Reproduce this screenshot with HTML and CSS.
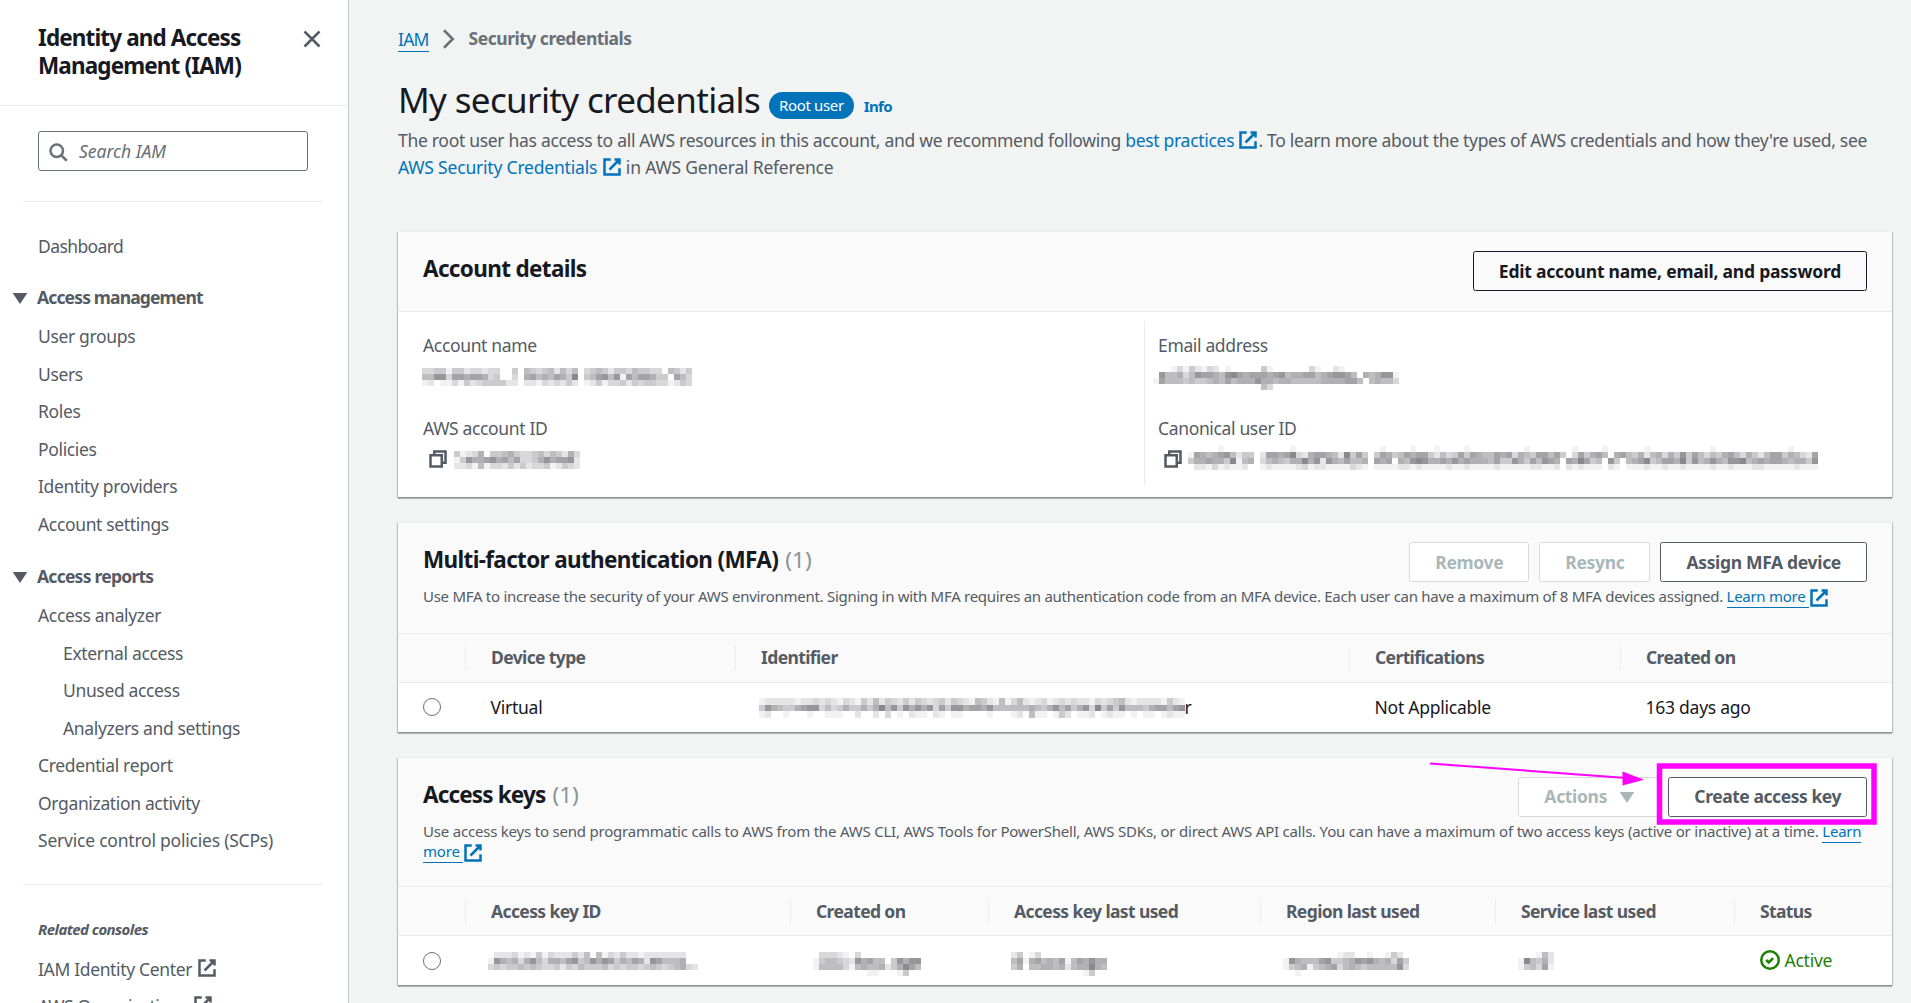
FILE: index.html
```html
<!DOCTYPE html>
<html lang="en">
<head>
<meta charset="utf-8">
<title>Security credentials | IAM</title>
<link rel="stylesheet" href="styles.css">
</head>
<body>
<svg class="sprite" aria-hidden="true">
  <symbol id="external" viewBox="0 0 16 16"><path d="M10 2h4v4M6 10l8-8M14 9.05V14H2V2h5"/></symbol>
  <symbol id="copy" viewBox="0 0 16 16"><path d="M2 5h9v9H2zM5 5V2h9v9h-3"/></symbol>
  <symbol id="close" viewBox="0 0 16 16"><path d="M2 2l12 12M14 2L2 14"/></symbol>
  <symbol id="angle" viewBox="0 0 16 16"><path d="M4 1l7 7-7 7"/></symbol>
  <symbol id="caret" viewBox="0 0 16 16"><path d="M4 5h8l-4 6z"/></symbol>
  <symbol id="search" viewBox="0 0 16 16"><circle cx="7" cy="7" r="5"/><path d="M15 15l-4.5-4.5"/></symbol>
  <symbol id="success" viewBox="0 0 16 16"><circle cx="8" cy="8" r="7"/><path d="M5 8l2 2 3.5-3.5"/></symbol>
</svg>
<div class="app">
  <aside class="sidebar">
    <header class="side-head">
      <h2>Identity and Access<br>Management (IAM)</h2>
      <svg class="icon close"><use href="#close"/></svg>
    </header>
    <div class="search"><svg class="icon"><use href="#search"/></svg><span>Search IAM</span></div>
    <hr>
    <nav class="nav">
      <a class="home">Dashboard</a>
      <h3><svg class="icon solid"><use href="#caret"/></svg>Access management</h3>
      <a>User groups</a>
      <a>Users</a>
      <a>Roles</a>
      <a>Policies</a>
      <a>Identity providers</a>
      <a>Account settings</a>
      <h3 class="second"><svg class="icon solid"><use href="#caret"/></svg>Access reports</h3>
      <a>Access analyzer</a>
      <a class="sub">External access</a>
      <a class="sub">Unused access</a>
      <a class="sub">Analyzers and settings</a>
      <a>Credential report</a>
      <a>Organization activity</a>
      <a class="scp">Service control policies (SCPs)</a>
    </nav>
    <hr class="lower">
    <nav class="nav related">
      <h4>Related consoles</h4>
      <a>IAM Identity Center <svg class="icon"><use href="#external"/></svg></a>
      <a>AWS Organizations <svg class="icon"><use href="#external"/></svg></a>
    </nav>
  </aside>

  <main class="main">
    <div class="crumbs"><a>IAM</a><svg class="icon"><use href="#angle"/></svg><b>Security credentials</b></div>
    <div class="title"><h1>My security credentials</h1><span class="badge">Root user</span><a class="info">Info</a></div>
    <p class="intro">The root user has access to all AWS resources in this account, and we recommend following <a>best practices <svg class="icon"><use href="#external"/></svg></a>. To learn more about the types of AWS credentials and how they're used, see<br><span class="second-line"><a>AWS Security Credentials <svg class="icon"><use href="#external"/></svg></a> in AWS General Reference</span></p>

    <section class="panel">
      <div class="panel-head account-head">
        <h2>Account details</h2>
        <div class="actions"><button class="btn strong">Edit account name, email, and password</button></div>
      </div>
      <div class="details">
        <dl>
          <dt>Account name</dt>
          <dd><span class="mosaic" data-cells="334414423323300405434525350345424435443305424|558837767763400306756576490457858175776440753|120113142344442202213232420124133424344331243"></span></dd>
          <dt>AWS account ID</dt>
          <dd class="copyable"><svg class="icon"><use href="#copy"/></svg><span class="mosaic" data-cells="412360445643345354263|148667867573346867782|223151332424233412432"></span></dd>
        </dl>
        <dl>
          <dt>Email address</dt>
          <dd class="email"><span class="mosaic" data-cells="00013142132010000041000000310021000000000|08556358776589767776785667756788750656881|17555454456575666866566555556666775056553|00000000000000000053000000000000000000000"></span></dd>
          <dt>Canonical user ID</dt>
          <dd class="copyable canonical"><svg class="icon"><use href="#copy"/></svg><span class="mosaic" data-cells="000001000000000001000000000000001000010001000010000000001000000010000100000010000000000100000000000010000|176567852440277679326776529474047645767742534747655767365477574037467506754625636484753546753642577465327|466766491560356546696828657556076706589866768676665744864758760769745084056794577694856865889567677656648|022131211200121111231221111321011112212111121121111211111221120212111021011121121121111211211122111112111"></span></dd>
        </dl>
      </div>
    </section>

    <section class="panel">
      <div class="panel-head mfa-head">
        <div class="row">
          <h2>Multi-factor authentication (MFA) <i>(1)</i></h2>
          <div class="actions"><button class="btn off">Remove</button><button class="btn off">Resync</button><button class="btn">Assign MFA device</button></div>
        </div>
        <p>Use MFA to increase the security of your AWS environment. Signing in with MFA requires an authentication code from an MFA device. Each user can have a maximum of 8 MFA devices assigned. <a>Learn more </a><svg class="icon"><use href="#external"/></svg></p>
      </div>
      <div class="grid mfa heads"><span></span><span>Device type</span><span>Identifier</span><span>Certifications</span><span>Created on</span></div>
      <div class="grid mfa cells"><span><i class="radio"></i></span><span>Virtual</span><span class="ident"><span class="mosaic tall" data-cells="12222212232321321425243242432342432154215135212312323221323452122221421|48654467883534644646958486868374886776855555565468574683947485554677578|12001000100111002002030102110210110000100012051101420112012110101101211"></span>r</span><span>Not Applicable</span><span>163 days ago</span></div>
    </section>

    <section class="panel">
      <div class="panel-head keys-head">
        <div class="row">
          <h2>Access keys <i>(1)</i></h2>
          <div class="actions"><button class="btn off menu">Actions<svg class="icon solid"><use href="#caret"/></svg></button><button class="btn create">Create access key</button></div>
        </div>
        <p>Use access keys to send programmatic calls to AWS from the AWS CLI, AWS Tools for PowerShell, AWS SDKs, or direct AWS API calls. You can have a maximum of two access keys (active or inactive) at a time. <a>Learn</a><br><a>more </a><svg class="icon"><use href="#external"/></svg></p>
      </div>
      <div class="grid keys heads"><span></span><span>Access key ID</span><span>Created on</span><span>Access key last used</span><span>Region last used</span><span>Service last used</span><span>Status</span></div>
      <div class="grid keys cells"><span><i class="radio"></i></span><span><span class="mosaic" data-cells="02223121413222425051324221222222200|18656368536657845868746576287555600|34344545433424354445343443454345632"></span></span><span><span class="mosaic" data-cells="033321030000000000|145543286755048688|155553156556246975|000000000110001400"></span></span><span><span class="mosaic" data-cells="2401300000000000|5716756571576866|4605566562566965|0000000000001400"></span></span><span><span class="mosaic" data-cells="000000000122001001420|186555784456878656374|145614567356545555583|001000000000000000000"></span></span><span><span class="mosaic" data-cells="000152|195462|145371|000000"></span></span><span class="ok"><svg class="icon"><use href="#success"/></svg>Active</span></div>
    </section>
  </main>
</div>
<svg class="annotation" viewBox="0 0 450 70" aria-hidden="true">
  <path class="line" d="M10 3.5L206 18"/>
  <path class="tip" d="M202.5 11.5V25.5L224 19.7z"/>
  <rect x="239.5" y="6" width="214.5" height="56"/>
</svg>
<script src="mosaic.js"></script>
</body>
</html>
```
FILE: styles.css
```css
* { box-sizing: border-box; }
body {
  margin: 0;
  background: #f2f3f3;
  color: #16191f;
  font: 17.5px/27.5px "Noto Sans", sans-serif;
  letter-spacing: -.35px;
}
h1, h2, h3, h4, p, dl, dd { margin: 0; }
.sprite { position: absolute; width: 0; height: 0; }
.icon {
  width: 20px;
  height: 20px;
  flex: none;
  fill: none;
  stroke: currentColor;
  stroke-width: 2;
  vertical-align: -3px;
}
.solid { fill: currentColor; }
.app { display: flex; height: 1003px; overflow: hidden; }

/* navigation */
.sidebar {
  width: 349px;
  flex: none;
  background: #fff;
  border-right: 1px solid #c4c9ca;
  color: #545b64;
}
.side-head {
  display: flex;
  justify-content: space-between;
  height: 106px;
  padding: 24px 26px 0 38px;
  border-bottom: 1px solid #eaeded;
}
h2 { font-size: 22.5px; line-height: 27.5px; letter-spacing: -.66px; color: #16191f; }
.side-head h2 { line-height: 28px; letter-spacing: -.87px; }
.close { margin-top: 5px; }
.search {
  display: flex;
  align-items: center;
  gap: 11px;
  width: 270px;
  height: 40px;
  margin: 25px 0 0 38px;
  padding: 1px 9px 0;
  border: 1px solid #687078;
  border-radius: 3px;
  font-style: italic;
  letter-spacing: 0;
  color: #687078;
}
hr { height: 1px; margin: 30px 25px 0 23px; border: 0; background: #eaeded; }
hr.lower { margin-top: 29.5px; }
.nav { display: flex; flex-direction: column; gap: 10px; padding: 30.5px 0 0 38px; }
.nav .home { margin-bottom: 14px; letter-spacing: -.6px; }
.nav h3 { display: flex; align-items: center; gap: 7px; margin: 0 0 1.5px -28px; font-size: 17.5px; letter-spacing: -.85px; }
.nav h3.second { margin-top: 15px; letter-spacing: -.75px; }
.nav .sub { padding-left: 25px; }
.nav .scp { letter-spacing: -.22px; }
.nav h4 { margin-bottom: 2.5px; font-size: 15px; font-style: italic; letter-spacing: -.58px; }
.related .icon { margin-left: 1px; vertical-align: -2px; }

/* page header */
.main { width: 1494px; margin-left: 49px; padding-top: 25px; }
.crumbs { display: flex; align-items: center; gap: 10px; color: #687078; }
.crumbs a { height: 25.5px; border-bottom: 1px solid; line-height: 27.5px; letter-spacing: -.8px; }
.crumbs b { letter-spacing: -.49px; }
a { color: #0073bb; }
.nav a { color: #545b64; }
.title { display: flex; height: 45px; margin-top: 24px; }
h1 { font-size: 35px; line-height: 45px; font-weight: 400; letter-spacing: -.65px; }
.badge {
  height: 27px;
  margin: 15.3px 0 0 9px;
  padding: 0 10px;
  border-radius: 13.5px;
  background: #0073bb;
  color: #fff;
  font-size: 15px;
  line-height: 26px;
}
.info { margin: 16.5px 0 0 10px; font-size: 15px; font-weight: 700; letter-spacing: -.69px; }
.intro { margin-top: 5.4px; color: #545b64; letter-spacing: -.3px; white-space: nowrap; }
.second-line { letter-spacing: -.2px; }

/* panels */
.panel {
  margin-bottom: 25px;
  border-top: 1px solid #eaeded;
  background: #fff;
  box-shadow: 0 1px 0 0 #879596, 0 2px 1px 0 rgba(0,28,36,.22), 1px 1px 1px 0 rgba(0,28,36,.2), -1px 1px 1px 0 rgba(0,28,36,.2);
}
.intro + .panel { margin-top: 49.6px; }
.panel-head { padding: 19px 25px 25.5px; border-bottom: 1px solid #eaeded; background: #fafafa; }
.mfa-head { padding-bottom: 26.5px; }
.row, .account-head { display: flex; justify-content: space-between; }
.row h2, .account-head h2 { margin-top: 4px; }
.account-head { height: 80px; padding-bottom: 0; }
.panel-head i { margin-left: 2px; font-style: normal; font-weight: 400; letter-spacing: 0; color: #879596; }
.panel-head p {
  margin-top: 4px;
  color: #545b64;
  font-size: 15px;
  line-height: 20px;
  letter-spacing: -.28px;
  white-space: nowrap;
}
.keys-head h2 { letter-spacing: -.85px; }
.keys-head p { letter-spacing: -.205px; }
.panel-head p a { padding-bottom: 1px; border-bottom: 1px solid; white-space: pre; }
.row { height: 40px; }
.panel-head p .icon { margin-block: -4px; vertical-align: -2px; color: #0073bb; }
.actions { display: flex; gap: 10px; height: 40px; }
.btn {
  display: flex;
  align-items: center;
  padding: 0 25px;
  border: 1px solid #545b64;
  border-radius: 2.5px;
  background: #fff;
  color: #545b64;
  font: 700 17.5px/27.5px "Noto Sans", sans-serif;
  letter-spacing: -.33px;
}
.strong { border-color: #16191f; background: none; color: #16191f; letter-spacing: -.22px; }
.create { letter-spacing: -.45px; }
.off { border-color: #d5dbdb; color: #aab7b8; }
.menu { gap: 10px; width: 140px; }
.details { display: flex; height: 185px; padding: 9px 0 12px 25px; }
.details dl { width: 721px; padding-top: 11px; color: #545b64; }
.details dl + dl { width: 748px; padding-left: 13px; border-left: 1px solid #eaeded; }
dt { height: 36px; }
dd { height: 47px; margin-left: -1px; }
.email { margin: -2px 0 2px -5px; }
.copyable { display: flex; margin-left: 5px; }
.copyable .icon { margin-top: -2px; }
.copyable .mosaic { margin-left: 6px; }
.canonical .mosaic { margin: -5px 0 0 5px; }

/* tables */
.grid { display: grid; align-items: center; }
.grid > span { padding-left: 25.5px; white-space: nowrap; }
.grid > span:first-child { padding-left: 24.5px; }
.mfa { grid-template-columns: 67px 270px 614px 271px 1fr; }
.keys { grid-template-columns: 67px 325px 198px 272px 235px 239px 1fr; }
.heads {
  height: 49px;
  border-bottom: 1px solid #eaeded;
  background: #fafafa;
  color: #545b64;
  font-weight: 700;
  letter-spacing: -.62px;
}
.heads > span { height: 25px; line-height: 25px; }
.heads > span + span { padding-left: 25px; border-left: 1px solid #eaeded; }
.cells { height: 49px; letter-spacing: -.25px; }
.radio {
  display: block;
  width: 18px;
  height: 18px;
  border: 1px solid #687078;
  border-radius: 50%;
}
.cells .mosaic { display: block; height: 18px; margin-left: -3px; }
.cells .ident { display: flex; align-items: center; }
.ident .mosaic { margin-left: -2px; }
.ok { color: #1d8102; }
.ok .icon { margin-right: 5px; }
.mosaic { display: inline-block; }
.mosaic svg { display: block; overflow: visible; }
dd .mosaic { vertical-align: top; }

.annotation {
  position: absolute;
  left: 1420px;
  top: 760px;
  width: 450px;
  height: 70px;
  overflow: visible;
  fill: none;
  stroke: #f0f;
}
.annotation rect { stroke-width: 5.5; }
.annotation .line { stroke-width: 2; }
.annotation .tip { fill: #f0f; stroke: none; }
```
FILE: mosaic.js
```js
// Draws redacted values as a grid of grey cells; each digit is a cell's darkness.
const SVG = 'http://www.w3.org/2000/svg';
for (const host of document.querySelectorAll('.mosaic')) {
  const rows = host.dataset.cells.split('|');
  const w = 6, h = host.classList.contains('tall') ? 6.67 : 6;
  const columns = rows[0].length;
  const svg = document.createElementNS(SVG, 'svg');
  svg.setAttribute('width', columns * w);
  svg.setAttribute('height', rows.length * h);
  svg.setAttribute('shape-rendering', 'crispEdges');
  rows.forEach((row, y) => {
    for (let x = 0; x < columns; x++) {
      const level = Number(row[x] || 0);
      if (!level) continue;
      const tone = 255 - level * 13;
      const cell = document.createElementNS(SVG, 'rect');
      cell.setAttribute('x', x * w);
      cell.setAttribute('y', y * h);
      cell.setAttribute('width', w);
      cell.setAttribute('height', h);
      cell.setAttribute('fill', `rgb(${tone},${tone},${tone + 2})`);
      svg.append(cell);
    }
  });
  host.append(svg);
}
```
